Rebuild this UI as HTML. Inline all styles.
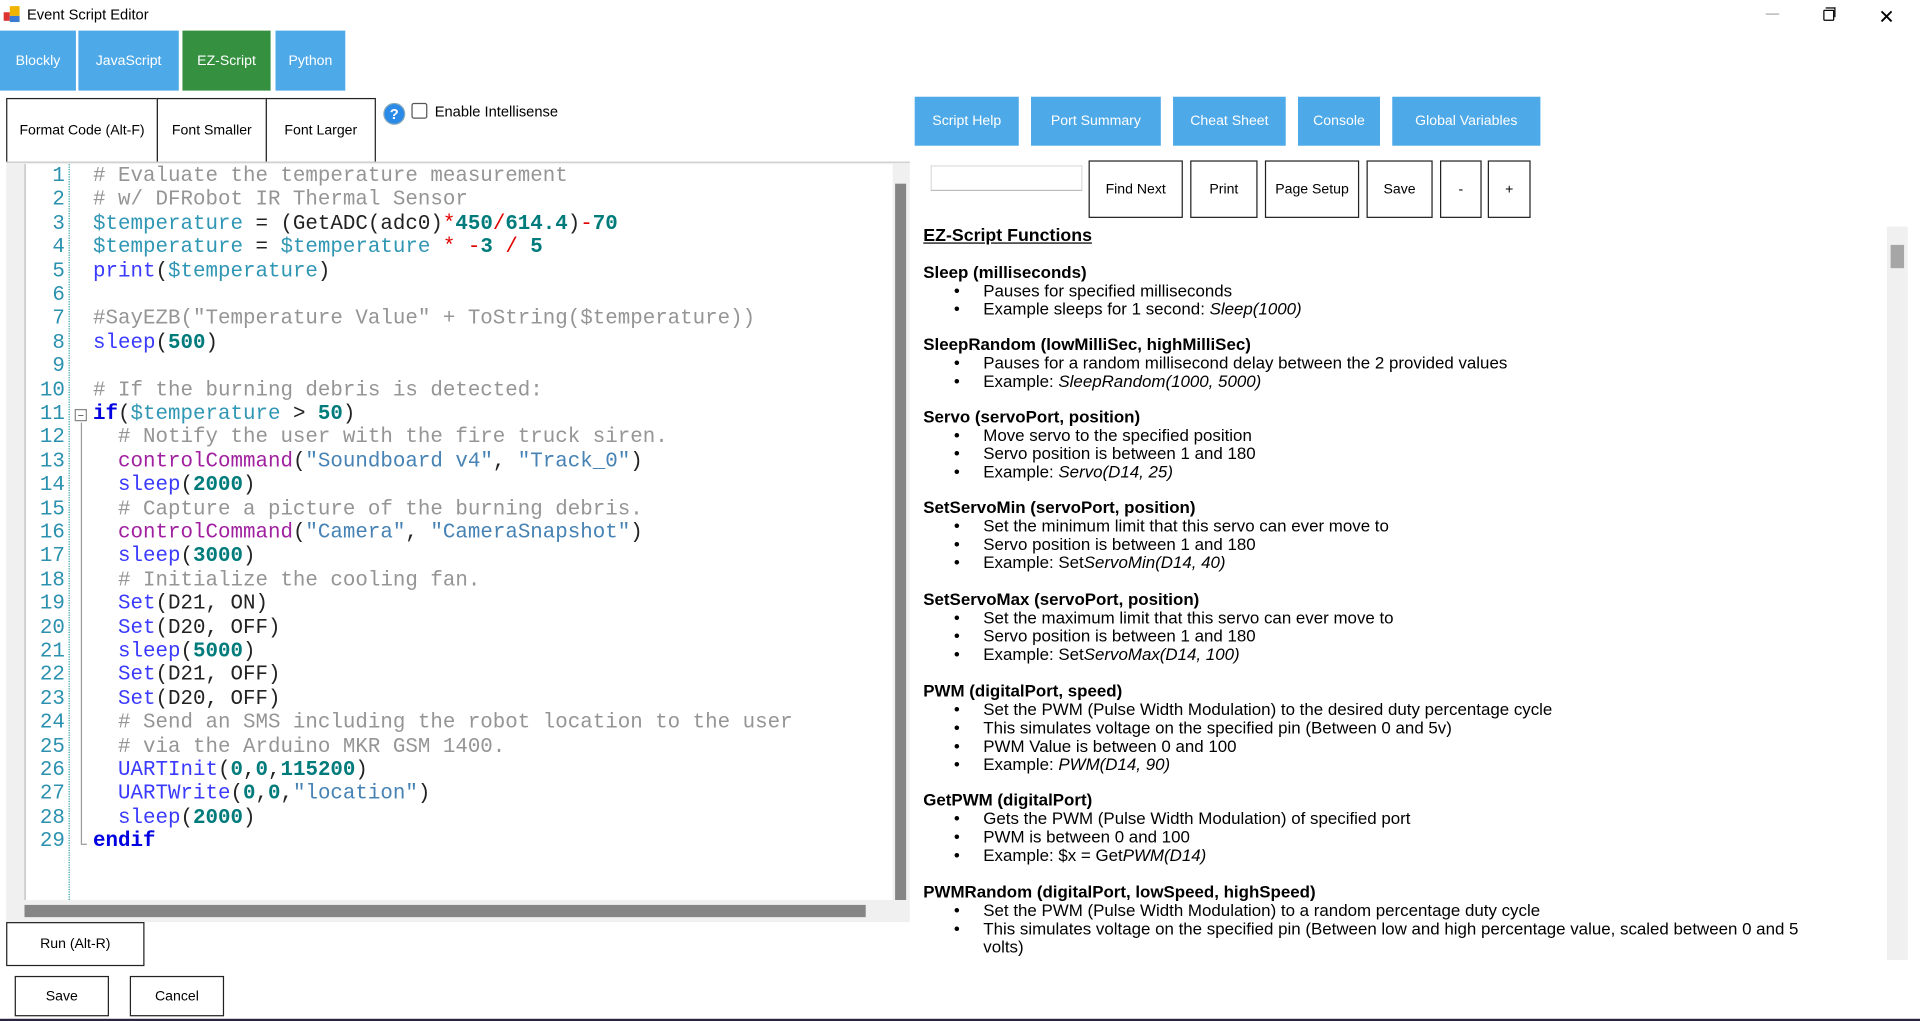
<!DOCTYPE html>
<html><head><meta charset="utf-8">
<style>
html,body{margin:0;padding:0;width:1920px;height:1021px;overflow:hidden;background:#fff}
#w{position:absolute;left:0;top:0;width:1568px;height:834px;transform:scale(1.22449);transform-origin:0 0;font-family:"Liberation Sans",sans-serif;overflow:hidden;background:#fff}
.a{position:absolute}
.tab{position:absolute;top:25px;height:49px;color:#fff;font-size:11.5px;display:flex;align-items:center;justify-content:center;background:#4da9e8}
.g{background:#359140}
.btn{position:absolute;box-sizing:border-box;border:1px solid #222;background:#fff;font-size:11.5px;display:flex;align-items:center;justify-content:center;color:#000}
.rb{position:absolute;top:79px;height:40px;color:#fff;font-size:11.5px;display:flex;align-items:center;justify-content:center;background:#4da9e8}
#code{position:absolute;left:0;top:135px;font-family:"Liberation Mono",monospace;font-size:17px;line-height:19.4px;white-space:pre}
.ln{position:absolute;left:20px;width:33px;text-align:right;color:#2b91af}
.tx{position:absolute;left:76px}
.c{color:#959595}.v{color:#2f96b4}.n{color:#007b7b;font-weight:bold}.o{color:#e00000}.f{color:#3a3aff}.k{color:#0000e0;font-weight:bold}.p{color:#a020a0}.s{color:#4682b4}.d{color:#222}
.help{position:absolute;left:754px;font-size:13.8px;color:#000;line-height:15px}
.help ul{margin:0;padding:0 0 0 49px;list-style:none}
.help li{position:relative}
.help li:before{content:"•";position:absolute;left:-24px}
</style></head><body><div id="w">
<div class="a" style="left:3px;top:5px;width:14px;height:14px">
<div class="a" style="left:0;top:5px;width:5px;height:7px;background:#d33"></div>
<div class="a" style="left:5px;top:0;width:8px;height:8px;background:#f0b400"></div>
<div class="a" style="left:5px;top:8px;width:8px;height:5px;background:#3a7bd5"></div>
</div>
<div class="a" style="left:22px;top:5px;font-size:12px;color:#000">Event Script Editor</div>
<div class="a" style="left:1442px;top:11px;width:11px;height:1px;background:#aaa"></div>
<div class="a" style="left:1489px;top:8px;width:7px;height:7px;border:1px solid #000;border-radius:1px"></div>
<div class="a" style="left:1491px;top:6px;width:7px;height:7px;border-top:1px solid #000;border-right:1px solid #000"></div>
<div class="a" style="left:1534px;top:4px;font-size:16px;color:#000">✕</div>
<div class="tab" style="left:0;width:62px">Blockly</div>
<div class="tab" style="left:64px;width:82px">JavaScript</div>
<div class="tab g" style="left:149px;width:72px">EZ-Script</div>
<div class="tab" style="left:225px;width:57px">Python</div>
<div class="btn" style="left:5px;top:80px;width:124px;height:53px">Format Code (Alt-F)</div>
<div class="btn" style="left:128px;top:80px;width:90px;height:53px">Font Smaller</div>
<div class="btn" style="left:217px;top:80px;width:90px;height:53px">Font Larger</div>
<div class="a" style="left:313px;top:84px;width:16px;height:16px;border-radius:50%;background:#2a8ae8;border:1px solid #8ab;color:#fff;font-size:12px;font-weight:bold;text-align:center;line-height:16px">?</div>
<div class="a" style="left:336px;top:84px;width:11px;height:11px;border:1px solid #555;border-radius:2px;background:#fff"></div>
<div class="a" style="left:355px;top:84px;font-size:12px">Enable Intellisense</div>
<div class="a" style="left:5px;top:132px;width:738px;height:620px;background:#f0f0f0;border-top:1px solid #ccc"></div>
<div class="a" style="left:20px;top:134px;width:708px;height:601px;background:#fff;border-left:1px solid #bbb"></div>
<div class="a" style="left:56px;top:134px;height:601px;border-left:1px dotted #2a9d9d"></div>
<div class="a" style="left:66px;top:345px;height:344px;border-left:1px solid #999"></div>
<div class="a" style="left:66px;top:689px;width:5px;border-top:1px solid #999"></div>
<div class="a" style="left:61px;top:334px;width:8px;height:8px;border:1px solid #888;background:#fff;font-size:9px;line-height:8px;text-align:center;color:#444">−</div>
<div class="a" style="left:731px;top:150px;width:9px;height:585px;background:#858585"></div>
<div class="a" style="left:20px;top:737px;width:708px;height:13px;background:#f0f0f0"></div>
<div class="a" style="left:20px;top:739px;width:687px;height:10px;background:#858585"></div>
<div id="code">
<div class="ln" style="top:0">1</div><div class="tx c" style="top:0"># Evaluate the temperature measurement</div>
<div class="ln" style="top:19.4px">2</div><div class="tx c" style="top:19.4px"># w/ DFRobot IR Thermal Sensor</div>
<div class="ln" style="top:38.8px">3</div><div class="tx" style="top:38.8px"><span class="v">$temperature</span><span class="d"> = (GetADC(adc0)</span><span class="o">*</span><span class="n">450</span><span class="o">/</span><span class="n">614.4</span><span class="d">)</span><span class="o">-</span><span class="n">70</span></div>
<div class="ln" style="top:58.2px">4</div><div class="tx" style="top:58.2px"><span class="v">$temperature</span><span class="d"> = </span><span class="v">$temperature</span> <span class="o">*</span> <span class="o">-</span><span class="n">3</span> <span class="o">/</span> <span class="n">5</span></div>
<div class="ln" style="top:77.6px">5</div><div class="tx" style="top:77.6px"><span class="f">print</span><span class="d">(</span><span class="v">$temperature</span><span class="d">)</span></div>
<div class="ln" style="top:97px">6</div>
<div class="ln" style="top:116.4px">7</div><div class="tx c" style="top:116.4px">#SayEZB("Temperature Value" + ToString($temperature))</div>
<div class="ln" style="top:135.8px">8</div><div class="tx" style="top:135.8px"><span class="f">sleep</span><span class="d">(</span><span class="n">500</span><span class="d">)</span></div>
<div class="ln" style="top:155.2px">9</div>
<div class="ln" style="top:174.6px">10</div><div class="tx c" style="top:174.6px"># If the burning debris is detected:</div>
<div class="ln" style="top:194px">11</div><div class="tx" style="top:194px"><span class="k">if</span><span class="d">(</span><span class="v">$temperature</span><span class="d"> &gt; </span><span class="n">50</span><span class="d">)</span></div>
<div class="ln" style="top:213.4px">12</div><div class="tx c" style="top:213.4px">  # Notify the user with the fire truck siren.</div>
<div class="ln" style="top:232.8px">13</div><div class="tx" style="top:232.8px">  <span class="p">controlCommand</span><span class="d">(</span><span class="s">"Soundboard v4"</span><span class="d">, </span><span class="s">"Track_0"</span><span class="d">)</span></div>
<div class="ln" style="top:252.2px">14</div><div class="tx" style="top:252.2px">  <span class="f">sleep</span><span class="d">(</span><span class="n">2000</span><span class="d">)</span></div>
<div class="ln" style="top:271.6px">15</div><div class="tx c" style="top:271.6px">  # Capture a picture of the burning debris.</div>
<div class="ln" style="top:291px">16</div><div class="tx" style="top:291px">  <span class="p">controlCommand</span><span class="d">(</span><span class="s">"Camera"</span><span class="d">, </span><span class="s">"CameraSnapshot"</span><span class="d">)</span></div>
<div class="ln" style="top:310.4px">17</div><div class="tx" style="top:310.4px">  <span class="f">sleep</span><span class="d">(</span><span class="n">3000</span><span class="d">)</span></div>
<div class="ln" style="top:329.8px">18</div><div class="tx c" style="top:329.8px">  # Initialize the cooling fan.</div>
<div class="ln" style="top:349.2px">19</div><div class="tx" style="top:349.2px">  <span class="f">Set</span><span class="d">(D21, ON)</span></div>
<div class="ln" style="top:368.6px">20</div><div class="tx" style="top:368.6px">  <span class="f">Set</span><span class="d">(D20, OFF)</span></div>
<div class="ln" style="top:388px">21</div><div class="tx" style="top:388px">  <span class="f">sleep</span><span class="d">(</span><span class="n">5000</span><span class="d">)</span></div>
<div class="ln" style="top:407.4px">22</div><div class="tx" style="top:407.4px">  <span class="f">Set</span><span class="d">(D21, OFF)</span></div>
<div class="ln" style="top:426.8px">23</div><div class="tx" style="top:426.8px">  <span class="f">Set</span><span class="d">(D20, OFF)</span></div>
<div class="ln" style="top:446.2px">24</div><div class="tx c" style="top:446.2px">  # Send an SMS including the robot location to the user</div>
<div class="ln" style="top:465.6px">25</div><div class="tx c" style="top:465.6px">  # via the Arduino MKR GSM 1400.</div>
<div class="ln" style="top:485px">26</div><div class="tx" style="top:485px">  <span class="f">UARTInit</span><span class="d">(</span><span class="n">0</span><span class="d">,</span><span class="n">0</span><span class="d">,</span><span class="n">115200</span><span class="d">)</span></div>
<div class="ln" style="top:504.4px">27</div><div class="tx" style="top:504.4px">  <span class="f">UARTWrite</span><span class="d">(</span><span class="n">0</span><span class="d">,</span><span class="n">0</span><span class="d">,</span><span class="s">"location"</span><span class="d">)</span></div>
<div class="ln" style="top:523.8px">28</div><div class="tx" style="top:523.8px">  <span class="f">sleep</span><span class="d">(</span><span class="n">2000</span><span class="d">)</span></div>
<div class="ln" style="top:543.2px">29</div><div class="tx" style="top:543.2px"><span class="k">endif</span></div>
</div>
<div class="btn" style="left:5px;top:753px;width:113px;height:36px">Run (Alt-R)</div>
<div class="btn" style="left:12px;top:797px;width:77px;height:33px">Save</div>
<div class="btn" style="left:106px;top:797px;width:77px;height:33px">Cancel</div>
<div class="a" style="left:0;top:832px;width:1568px;height:2px;background:#2a2440"></div>
<div class="rb g" style="left:747px;width:85px">Script Help</div>
<div class="rb" style="left:842px;width:106px">Port Summary</div>
<div class="rb" style="left:958px;width:92px">Cheat Sheet</div>
<div class="rb" style="left:1060px;width:67px">Console</div>
<div class="rb" style="left:1137px;width:121px">Global Variables</div>
<div class="a" style="left:760px;top:135px;width:122px;height:19px;border:1px solid #ddd;border-bottom-color:#bbb"></div>
<div class="btn" style="left:889px;top:131px;width:77px;height:47px">Find Next</div>
<div class="btn" style="left:972px;top:131px;width:55px;height:47px">Print</div>
<div class="btn" style="left:1033px;top:131px;width:77px;height:47px">Page Setup</div>
<div class="btn" style="left:1116px;top:131px;width:54px;height:47px">Save</div>
<div class="btn" style="left:1176px;top:131px;width:34px;height:47px">-</div>
<div class="btn" style="left:1215px;top:131px;width:35px;height:47px">+</div>
<div class="a" style="left:1541px;top:185px;width:17px;height:599px;background:#f0f0f0"></div>
<div class="a" style="left:1544px;top:200px;width:11px;height:19px;background:#a6a6a6"></div>
<div class="help" style="top:186px;font-size:14.5px;font-weight:bold;text-decoration:underline">EZ-Script Functions</div>
<div class="help" style="top:215px"><b>Sleep (milliseconds)</b><ul><li>Pauses for specified milliseconds</li><li>Example sleeps for 1 second: <i>Sleep(1000)</i></li></ul></div>
<div class="help" style="top:274px"><b>SleepRandom (lowMilliSec, highMilliSec)</b><ul><li>Pauses for a random millisecond delay between the 2 provided values</li><li>Example: <i>SleepRandom(1000, 5000)</i></li></ul></div>
<div class="help" style="top:333px"><b>Servo (servoPort, position)</b><ul><li>Move servo to the specified position</li><li>Servo position is between 1 and 180</li><li>Example: <i>Servo(D14, 25)</i></li></ul></div>
<div class="help" style="top:407px"><b>SetServoMin (servoPort, position)</b><ul><li>Set the minimum limit that this servo can ever move to</li><li>Servo position is between 1 and 180</li><li>Example: Set<i>ServoMin(D14, 40)</i></li></ul></div>
<div class="help" style="top:482px"><b>SetServoMax (servoPort, position)</b><ul><li>Set the maximum limit that this servo can ever move to</li><li>Servo position is between 1 and 180</li><li>Example: Set<i>ServoMax(D14, 100)</i></li></ul></div>
<div class="help" style="top:557px"><b>PWM (digitalPort, speed)</b><ul><li>Set the PWM (Pulse Width Modulation) to the desired duty percentage cycle</li><li>This simulates voltage on the specified pin (Between 0 and 5v)</li><li>PWM Value is between 0 and 100</li><li>Example: <i>PWM(D14, 90)</i></li></ul></div>
<div class="help" style="top:646px"><b>GetPWM (digitalPort)</b><ul><li>Gets the PWM (Pulse Width Modulation) of specified port</li><li>PWM is between 0 and 100</li><li>Example: $x = Get<i>PWM(D14)</i></li></ul></div>
<div class="help" style="top:721px;width:740px;height:62px;overflow:hidden"><b>PWMRandom (digitalPort, lowSpeed, highSpeed)</b><ul><li>Set the PWM (Pulse Width Modulation) to a random percentage duty cycle</li><li>This simulates voltage on the specified pin (Between low and high percentage value, scaled between 0 and 5 volts)</li><li>PWM Value is between 0 and 100</li></ul></div>
</div></body></html>
